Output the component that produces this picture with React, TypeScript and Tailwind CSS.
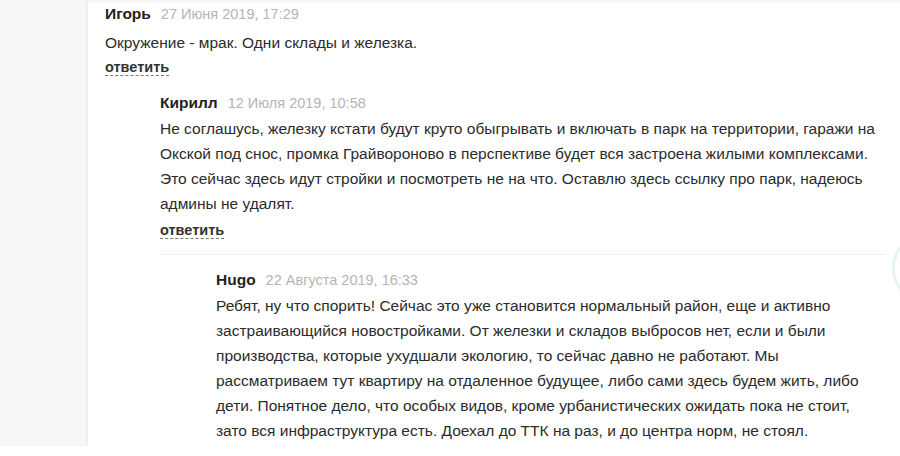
const comments = {
  igor: {
    name: "Игорь",
    date: "27 Июня 2019, 17:29",
    text: "Окружение - мрак. Одни склады и железка.",
  },
  kirill: {
    name: "Кирилл",
    date: "12 Июля 2019, 10:58",
    text: "Не соглашусь, железку кстати будут круто обыгрывать и включать в парк на территории, гаражи на Окской под снос, промка Грайвороново в перспективе будет вся застроена жилыми комплексами. Это сейчас здесь идут стройки и посмотреть не на что. Оставлю здесь ссылку про парк, надеюсь админы не удалят.",
  },
  hugo: {
    name: "Hugo",
    date: "22 Августа 2019, 16:33",
    text: "Ребят, ну что спорить! Сейчас это уже становится нормальный район, еще и активно застраивающийся новостройками. От железки и складов выбросов нет, если и были производства, которые ухудшали экологию, то сейчас давно не работают. Мы рассматриваем тут квартиру на отдаленное будущее, либо сами здесь будем жить, либо дети. Понятное дело, что особых видов, кроме урбанистических ожидать пока не стоит, зато вся инфраструктура есть. Доехал до ТТК на раз, и до центра норм, не стоял.",
  },
};

interface CommentProps {
  name: string;
  date: string;
  text: string;
  withReply?: boolean;
  topLevel?: boolean;
}

function Comment(props: CommentProps) {
  return (
    <div>
      {/* Name and date */}
      <div className="flex items-baseline gap-[10px] leading-[26px]">
        <span className="text-[15.5px] font-bold text-[#222]">{props.name}</span>
        <span className="text-[14.5px] text-[#b4b4b4]">{props.date}</span>
      </div>
      <p className={(props.topLevel ? "mt-[3px] " : "") + "text-[15.5px] leading-[25px] text-[#2b2b2b]"}>
        {props.text}
      </p>
      {props.withReply && (
        <div className={(props.topLevel ? "" : "mt-[2px] ") + "leading-[24px]"}>
          <a className="text-[14.5px] font-bold text-[#333] border-b border-dashed border-[#777] cursor-pointer">
            ответить
          </a>
        </div>
      )}
    </div>
  );
}

export default function App() {
  return (
    <div className="relative w-[900px] h-[456px] overflow-hidden bg-white font-['Liberation_Sans',Arial,sans-serif]">
      <div className="flex">
        {/* Left gray column */}
        <div className="w-[88px] h-[446px] shrink-0 bg-[#f7f7f7] shadow-[inset_-2px_0_2px_rgba(0,0,0,0.04)]" />
        {/* Comment thread */}
        <div className="flex-1 pl-[17px] pr-[14px] pt-px shadow-[inset_0_5px_4px_-3px_rgba(0,0,0,0.05)]">
          <Comment {...comments.igor} withReply topLevel />
          <div className="ml-[55px] mt-[11px]">
            <Comment {...comments.kirill} withReply />
            <div className="mt-[12px] border-t border-[#e3f4f8] pt-[12px]">
              <div className="ml-[56px] mr-[15px]">
                <Comment {...comments.hugo} />
              </div>
            </div>
          </div>
        </div>
      </div>
      {/* Floating circle at the right edge */}
      <div className="absolute left-[892px] top-[232px] h-[72px] w-[72px] rounded-full border-[3px] border-[#e6f5ea]" />
    </div>
  );
}
